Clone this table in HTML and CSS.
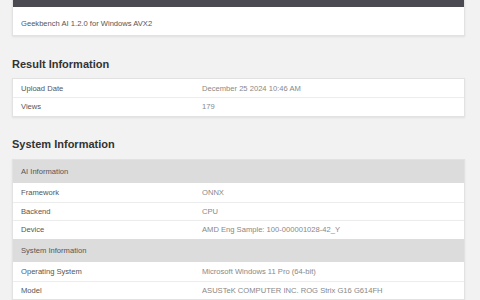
FILE: index.html
```html
<!DOCTYPE html>
<html>
<head>
<meta charset="utf-8">
<link rel="stylesheet" href="styles.css">
</head>
<body>
<div class="page">
  <div class="card top-card">
    <div class="top-bar"></div>
    <div class="top-body">Geekbench AI 1.2.0 for Windows AVX2</div>
  </div>

  <h2 class="heading">Result Information</h2>
  <div class="card table">
    <div class="row"><div class="label">Upload Date</div><div class="value">December 25 2024 10:46 AM</div></div>
    <div class="row"><div class="label">Views</div><div class="value">179</div></div>
  </div>

  <h2 class="heading">System Information</h2>
  <div class="card table">
    <div class="section">AI Information</div>
    <div class="row"><div class="label">Framework</div><div class="value">ONNX</div></div>
    <div class="row"><div class="label">Backend</div><div class="value">CPU</div></div>
    <div class="row"><div class="label">Device</div><div class="value">AMD Eng Sample: 100-000001028-42_Y</div></div>
    <div class="section">System Information</div>
    <div class="row"><div class="label">Operating System</div><div class="value">Microsoft Windows 11 Pro (64-bit)</div></div>
    <div class="row"><div class="label">Model</div><div class="value">ASUSTeK COMPUTER INC. ROG Strix G16 G614FH</div></div>
  </div>
</div>
</body>
</html>
```

FILE: styles.css
```css
html, body {
  margin: 0;
  padding: 0;
  background: #f2f2f2;
  font-family: "Liberation Sans", Arial, sans-serif;
  overflow: hidden;
}
.page {
  padding: 0 15px 0 12px;
  display: flex;
  flex-direction: column;
}
.card {
  background: #ffffff;
  border: 1px solid #e2e2e2;
  border-top: none;
  box-shadow: 0 1px 2px rgba(0, 0, 0, 0.08);
}
.top-bar {
  height: 7px;
  background: #4b4a52;
}
.top-body {
  height: 28px;
  box-sizing: border-box;
  padding: 12px 0 0 8px;
  font-size: 7.6px;
  line-height: 10px;
  color: #555;
}
.heading {
  margin: 21px 0 7px 0;
  font-size: 11px;
  line-height: 14px;
  font-weight: bold;
  color: #333;
}
.heading + .table { border-top: 1px solid #e2e2e2; }
.table + .heading { margin-top: 20px; margin-bottom: 8px; }
.row {
  display: grid;
  grid-template-columns: 189px 1fr;
  height: 18.5px;
  box-sizing: border-box;
  border-top: 1px solid #ececec;
  align-items: center;
  font-size: 7.6px;
}
.table > .row:first-child { border-top: none; height: 18px; }
.label {
  padding-left: 8px;
  color: #555;
}
.value {
  color: #888;
}
.section {
  height: 23.5px;
  box-sizing: border-box;
  padding-left: 8px;
  display: flex;
  align-items: center;
  background: #dcdcdc;
  font-size: 7.6px;
  color: #555;
}
.section + .row { border-top: none; }
```
